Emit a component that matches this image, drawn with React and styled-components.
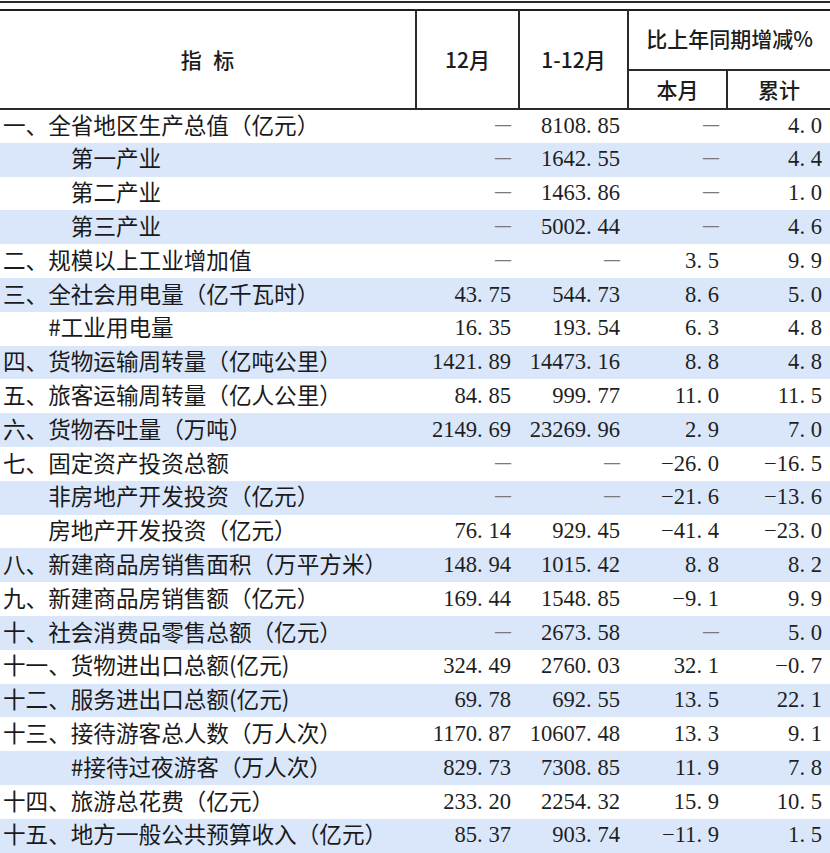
import React from 'react';
import styled, { createGlobalStyle } from 'styled-components';

const ROWS = [
  ['一、全省地区生产总值（亿元）', 0, '—', '8108.85', '—', '4.0'],
  ['第一产业', 3, '—', '1642.55', '—', '4.4'],
  ['第二产业', 3, '—', '1463.86', '—', '1.0'],
  ['第三产业', 3, '—', '5002.44', '—', '4.6'],
  ['二、规模以上工业增加值', 0, '—', '—', '3.5', '9.9'],
  ['三、全社会用电量（亿千瓦时）', 0, '43.75', '544.73', '8.6', '5.0'],
  ['#工业用电量', 2, '16.35', '193.54', '6.3', '4.8'],
  ['四、货物运输周转量（亿吨公里）', 0, '1421.89', '14473.16', '8.8', '4.8'],
  ['五、旅客运输周转量（亿人公里）', 0, '84.85', '999.77', '11.0', '11.5'],
  ['六、货物吞吐量（万吨）', 0, '2149.69', '23269.96', '2.9', '7.0'],
  ['七、固定资产投资总额', 0, '—', '—', '-26.0', '-16.5'],
  ['非房地产开发投资（亿元）', 2, '—', '—', '-21.6', '-13.6'],
  ['房地产开发投资（亿元）', 2, '76.14', '929.45', '-41.4', '-23.0'],
  ['八、新建商品房销售面积（万平方米）', 0, '148.94', '1015.42', '8.8', '8.2'],
  ['九、新建商品房销售额（亿元）', 0, '169.44', '1548.85', '-9.1', '9.9'],
  ['十、社会消费品零售总额（亿元）', 0, '—', '2673.58', '—', '5.0'],
  ['十一、货物进出口总额(亿元)', 0, '324.49', '2760.03', '32.1', '-0.7'],
  ['十二、服务进出口总额(亿元)', 0, '69.78', '692.55', '13.5', '22.1'],
  ['十三、接待游客总人数（万人次）', 0, '1170.87', '10607.48', '13.3', '9.1'],
  ['#接待过夜游客（万人次）', 3, '829.73', '7308.85', '11.9', '7.8'],
  ['十四、旅游总花费（亿元）', 0, '233.20', '2254.32', '15.9', '10.5'],
  ['十五、地方一般公共预算收入（亿元）', 0, '85.37', '903.74', '-11.9', '1.5'],
];

const Num = ({ value }) => {
  if (value === '—') return <Dash>—</Dash>;
  const text = value.replace('-', '−');
  const [int, dec] = text.split('.');
  return (
    <>
      {int}
      <Dot>.</Dot>
      {dec}
    </>
  );
};

const App = () => (
  <>
    <GlobalStyle />
    <Page>
      <TopRule />
      <Table>
        <colgroup>
          <col style={{ width: 416 }} />
          <col style={{ width: 103 }} />
          <col style={{ width: 109 }} />
          <col style={{ width: 99 }} />
          <col style={{ width: 103 }} />
        </colgroup>
        <thead>
          <tr>
            <HeadCell rowSpan={2} $first $spaced>指 标</HeadCell>
            <HeadCell rowSpan={2}>12月</HeadCell>
            <HeadCell rowSpan={2}>1-12月</HeadCell>
            <HeadCell colSpan={2} $tall>比上年同期增减%</HeadCell>
          </tr>
          <tr>
            <HeadCell $sub>本月</HeadCell>
            <HeadCell $sub>累计</HeadCell>
          </tr>
        </thead>
        <tbody>
          {ROWS.map(([label, indent, ...nums], i) => (
            <Row key={label} $shaded={i % 2 === 1}>
              <LabelCell $indent={indent}>{label}</LabelCell>
              {nums.map((n, j) => (
                <NumCell key={j}>
                  <Num value={n} />
                </NumCell>
              ))}
            </Row>
          ))}
        </tbody>
      </Table>
    </Page>
  </>
);

const GlobalStyle = createGlobalStyle`
  html, body {
    margin: 0;
    padding: 0;
    background: #ffffff;
  }
`;

const Page = styled.div`
  width: 830px;
  height: 853px;
  overflow: hidden;
  padding-top: 1px;
  box-sizing: border-box;
`;

const TopRule = styled.div`
  height: 6px;
  border-top: 2px solid #2b2b2b;
  box-sizing: content-box;
`;

const Table = styled.table`
  width: 830px;
  table-layout: fixed;
  border-collapse: collapse;
  border-spacing: 0;
  color: #1c1c1c;
  border-top: 2px solid #1e1e1e;
`;

const HeadCell = styled.th`
  font-family: 'Noto Sans CJK SC', 'Noto Sans', sans-serif;
  font-size: 21px;
  font-weight: 500;
  text-align: center;
  padding: 0 0 ${({ $tall }) => ($tall ? '4px' : '0')};
  height: ${({ $tall, $sub }) => ($tall ? '54px' : $sub ? '37px' : 'auto')};
  border-left: ${({ $first }) => ($first ? 'none' : '2px solid #2a2a2a')};
  border-bottom: 2px solid #2a2a2a;
  line-height: 1;
  word-spacing: ${({ $spaced }) => ($spaced ? '7px' : 'normal')};
  white-space: pre;
`;

const Row = styled.tr`
  background: ${({ $shaded }) => ($shaded ? '#dae7fb' : '#ffffff')};
  height: 33.8px;
`;

const LabelCell = styled.td`
  font-family: 'Noto Sans CJK SC', 'Noto Sans', sans-serif;
  font-size: 22.6px;
  line-height: 1;
  white-space: nowrap;
  padding: 0 0 2px ${({ $indent }) => 3 + $indent * 22.6}px;
  color: #1a1a1a;
`;

const NumCell = styled.td`
  font-family: 'Liberation Serif', 'Times New Roman', serif;
  font-size: 22.6px;
  line-height: 1;
  text-align: right;
  white-space: nowrap;
  padding: 0 8px 0 0;
  color: #1f1f1f;
`;

const Dot = styled.span`
  display: inline-block;
  width: 0.5em;
  text-align: left;
`;

const Dash = styled.span`
  font-size: 16px;
  font-weight: 700;
  color: #7a7a7a;
  position: relative;
  top: -3px;
`;

export default App;
